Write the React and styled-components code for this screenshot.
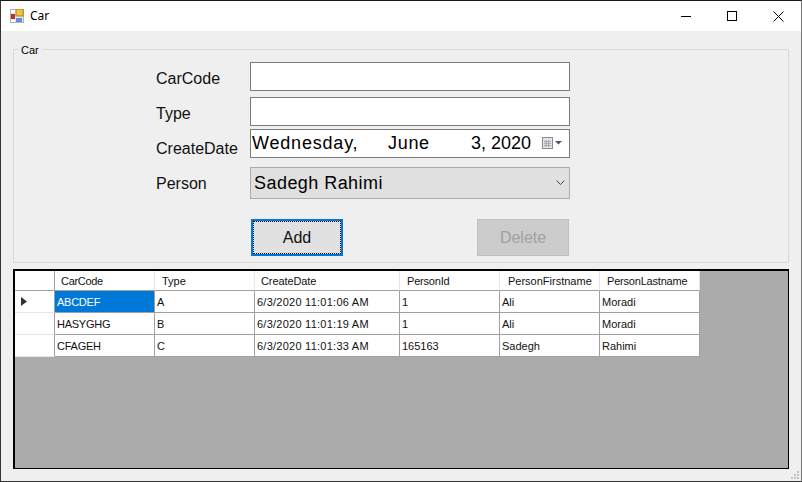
import React from "react";
import styled, { createGlobalStyle } from "styled-components";

const Global = createGlobalStyle`
  html, body { margin: 0; padding: 0; background: #efefef; }
  body { font-family: "Liberation Sans", Arial, sans-serif; color: #000; }
`;

const Win = styled.div`
  width: 802px; height: 482px; box-sizing: border-box; position: relative;
  border-top: 1px solid #1a1a1a; border-left: 1px solid #333; border-right: 1px solid #777; border-bottom: 1px solid #333;
  background: #efefef; overflow: hidden; display: flex; flex-direction: column;
`;
const TitleBar = styled.div`
  height: 30px; flex: none; background: #fff; display: flex; align-items: center; padding-left: 9px;
`;
const Title = styled.span`
  font: 12px "Noto Sans", sans-serif; margin-left: 5px; margin-top: -1px;
`;
const WinButtons = styled.div`
  margin-left: auto; display: flex; height: 100%;
`;
const WinButton = styled.div`
  width: 46px; height: 30px; display: flex; align-items: center; justify-content: center;
`;
const Content = styled.div`
  flex: 1; padding: 18px 12px 0 12px; display: flex; flex-direction: column;
`;
const Group = styled.fieldset`
  box-sizing: border-box; width: 776px; height: 214px; margin: 0; padding: 0; border: 1px solid #d9d9d9; position: relative;
`;
const Legend = styled.span`
  position: absolute; left: 4px; top: -6px; background: #efefef; padding: 0 4px 0 3px; font-size: 11px; line-height: 13px; color: #000;
`;
const Form = styled.div`
  display: grid; grid-template-columns: 94px 320px; column-gap: 0; padding: 12px 0 0 142px;
`;
const Label = styled.div`
  font-size: 16px; display: flex; align-items: center; height: ${p => p.$h}px; margin-bottom: ${p => p.$mb}px; color: #111; padding-top: ${p => p.$off}px; box-sizing: border-box;
`;
const Input = styled.div`
  box-sizing: border-box; height: 29px; border: 1px solid #7a7a7a; background: #fff; margin-bottom: ${p => p.$mb}px;
`;
const DateBox = styled(Input)`
  display: flex; align-items: center; font-size: 18px; padding: 0 6px 0 1px; white-space: pre; color: #000;
`;
const DateBit = styled.span`
  width: ${p => p.$w}px; flex: none; letter-spacing: ${p => p.$ls}px;
`;
const DateIcon = styled.svg`
  margin-left: auto;
`;
const Combo = styled.div`
  box-sizing: border-box; height: 32px; border: 1px solid #ababab; background: #e0e0e0; margin-bottom: 20px; display: flex; align-items: center; padding: 0 4px 0 3px; font-size: 18px; letter-spacing: 0.45px; color: #000; justify-content: space-between;
`;
const Actions = styled.div`
  grid-column: 2; display: flex; justify-content: space-between; padding: 0 1px;
`;
const AddBtn = styled.div`
  box-sizing: border-box; width: 92px; height: 37px; border: 2px solid #0078d7; background: #e1e1e1; display: flex; align-items: center; justify-content: center; font-size: 16px; position: relative; color: #111;
  &::after { content: ""; position: absolute; inset: 0; border: 1px dotted #000; }
`;
const DelBtn = styled.div`
  box-sizing: border-box; width: 92px; height: 37px; border: 1px solid #bfbfbf; background: #ccc; display: flex; align-items: center; justify-content: center; font-size: 16px; color: #a0a0a0;
`;
const Grid = styled.div`
  box-sizing: border-box; width: 776px; height: 200px; margin-top: 6px; border: 1px solid #000; border-top-width: 2px; border-left-width: 2px; background: #ababab;
`;
const Table = styled.div`
  display: grid; grid-template-columns: 40px 100px 100px 145px 100px 100px 100px; grid-template-rows: 20px 22px 22px 22px; width: 685px; font-size: 11px;
`;
const HeadCell = styled.div`
  box-sizing: border-box; background: #fff; border-right: 1px solid #e6e6e6; border-bottom: 1px solid #a0a0a0; display: flex; align-items: center; padding-left: ${p => p.$pad}px; letter-spacing: ${p => p.$ls}px; color: #111;
  &:nth-child(1) { border-right-color: #a0a0a0; }
`;
const RowHead = styled.div`
  box-sizing: border-box; background: #fff; border-right: 1px solid #a0a0a0; border-bottom: 1px solid #e6e6e6; display: flex; align-items: center; padding-left: 6px;
`;
const Cell = styled.div`
  box-sizing: border-box; background: ${p => (p.$sel ? "#0078d7" : "#fff")}; color: ${p => (p.$sel ? "#fff" : "#111")}; border-right: 1px solid #a0a0a0; border-bottom: 1px solid #a0a0a0; display: flex; align-items: center; padding-left: 2px; letter-spacing: ${p => p.$ls}px;
`;
const Grip = styled.svg`
  position: absolute; right: 2px; bottom: 2px;
`;

const cols = [
  ["CarCode", 6, -0.3], ["Type", 7, 0], ["CreateDate", 6, -0.1], ["PersonId", 7, -0.2], ["PersonFirstname", 8, 0], ["PersonLastname", 7, -0.2],
];
const cellLs = [-0.25, 0, 0.25, 0, 0, 0];
const rows = [
  ["ABCDEF", "A", "6/3/2020 11:01:06 AM", "1", "Ali", "Moradi"],
  ["HASYGHG", "B", "6/3/2020 11:01:19 AM", "1", "Ali", "Moradi"],
  ["CFAGEH", "C", "6/3/2020 11:01:33 AM", "165163", "Sadegh", "Rahimi"],
];

const AppIcon = () => (
  <svg width="15" height="14" viewBox="0 0 15 14">
    <rect x="0.5" y="0.5" width="13" height="13" fill="#e8e8e8" stroke="#b0b0b0" />
    <rect x="1" y="1" width="4" height="3" fill="#fff" />
    <rect x="6" y="0" width="7" height="7" fill="#f5c33b" stroke="#a8842a" />
    <rect x="1" y="5" width="4" height="5" fill="#b5322c" />
    <rect x="6" y="9" width="6" height="4" fill="#5b8fd6" />
    <rect x="1" y="11" width="4" height="2" fill="#fff" />
  </svg>
);

export default function App() {
  return (
    <>
      <Global />
      <Win>
        <TitleBar>
          <AppIcon />
          <Title>Car</Title>
          <WinButtons>
            <WinButton>
              <svg width="10" height="10" viewBox="0 0 10 10"><path d="M0 5.5H10" stroke="#000" /></svg>
            </WinButton>
            <WinButton>
              <svg width="10" height="10" viewBox="0 0 10 10"><rect x="0.5" y="0.5" width="9" height="9" fill="none" stroke="#000" /></svg>
            </WinButton>
            <WinButton>
              <svg width="11" height="11" viewBox="0 0 11 11"><path d="M0.5 0.5L10.5 10.5M10.5 0.5L0.5 10.5" stroke="#000" /></svg>
            </WinButton>
          </WinButtons>
        </TitleBar>
        <Content>
          <Group>
            <Legend>Car</Legend>
            <Form>
              <Label $h={29} $mb={6} $off={5}>CarCode</Label>
              <Input $mb={6} />
              <Label $h={29} $mb={3} $off={5}>Type</Label>
              <Input $mb={3} />
              <Label $h={29} $mb={9} $off={11}>CreateDate</Label>
              <DateBox $mb={9}>
                <DateBit $w={136} $ls={0.8}>Wednesday,</DateBit>
                <DateBit $w={83} $ls={0.7}>June</DateBit>
                <span>3, 2020</span>
                <DateIcon width="21" height="13" viewBox="0 0 21 13">
                  <rect x="0.5" y="0.5" width="10" height="11" fill="#e4e4e4" stroke="#8a8a8a" />
                  <path d="M2 4.5H9M2 6.5H9M2 8.5H9M4 3V10M6.5 3V10" stroke="#a8a8b0" />
                  <path d="M13 4H20L16.5 7.5Z" fill="#4d5670" />
                </DateIcon>
              </DateBox>
              <Label $h={32} $mb={20} $off={1}>Person</Label>
              <Combo>
                Sadegh Rahimi
                <svg width="9" height="6" viewBox="0 0 9 6"><path d="M0.5 0.5L4.5 4.5L8.5 0.5" fill="none" stroke="#444" /></svg>
              </Combo>
              <Actions>
                <AddBtn>Add</AddBtn>
                <DelBtn>Delete</DelBtn>
              </Actions>
            </Form>
          </Group>
          <Grid>
            <Table>
              <HeadCell $pad={0} $ls={0} />
              {cols.map(([c, p, l]) => <HeadCell key={c} $pad={p} $ls={l}>{c}</HeadCell>)}
              {rows.map((r, i) => (
                <React.Fragment key={r[0]}>
                  <RowHead>
                    {i === 0 && <svg width="6" height="9" viewBox="0 0 6 9"><path d="M0 0L6 4.5L0 9Z" fill="#333" /></svg>}
                  </RowHead>
                  {r.map((v, j) => <Cell key={j} $sel={i === 0 && j === 0} $ls={cellLs[j]}>{v}</Cell>)}
                </React.Fragment>
              ))}
            </Table>
          </Grid>
        </Content>
        <Grip width="8" height="8" viewBox="0 0 8 8">
          <path d="M6 0h2v2H6zM3 3h2v2H3zM6 3h2v2H6zM0 6h2v2H0zM3 6h2v2H3zM6 6h2v2H6z" fill="#c4c4c4" />
        </Grip>
      </Win>
    </>
  );
}
